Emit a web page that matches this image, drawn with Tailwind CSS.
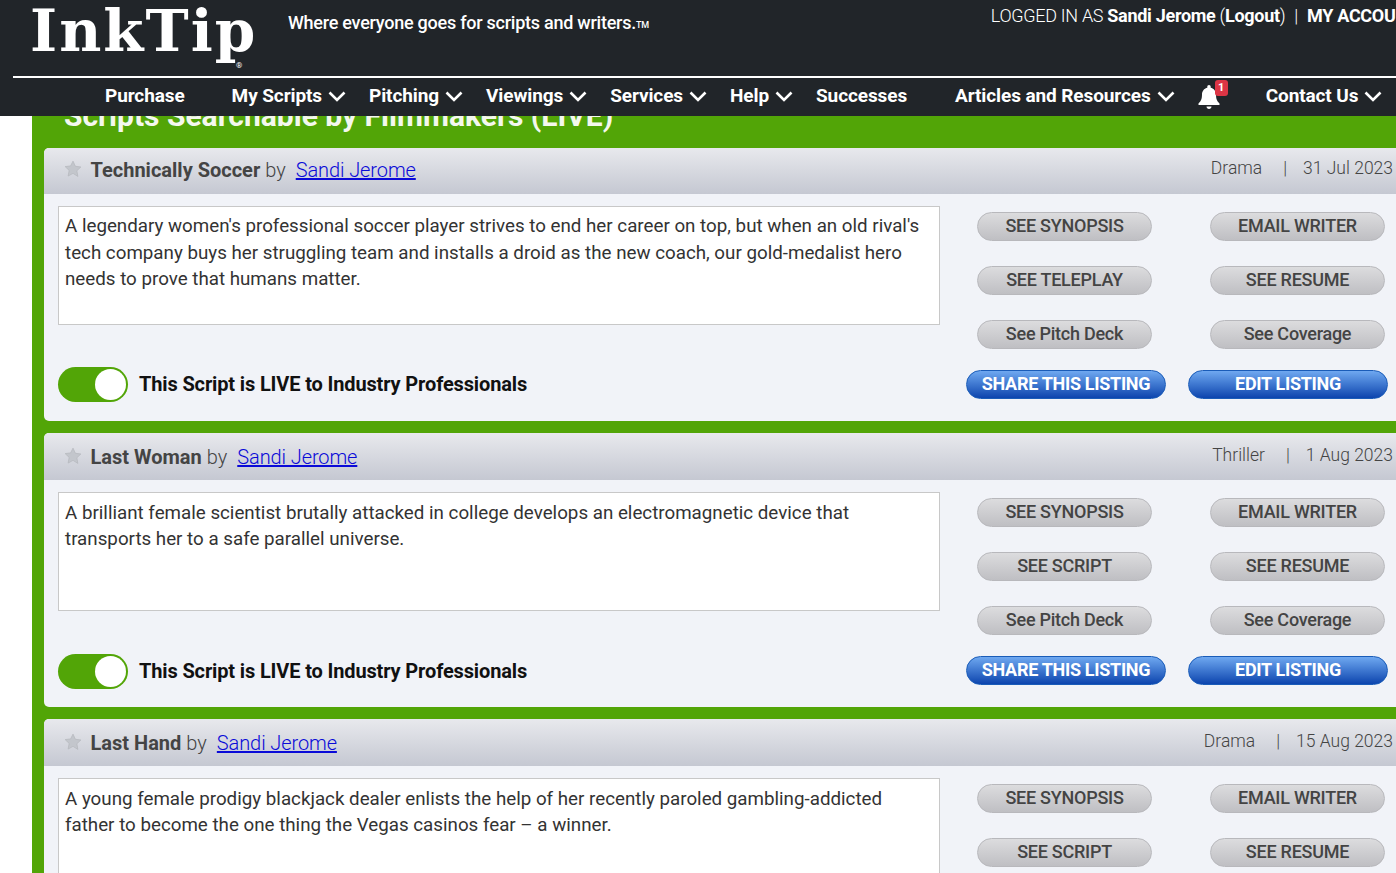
<!DOCTYPE html>
<html lang="en">
<head>
<meta charset="UTF-8">
<title>InkTip</title>
<script src="https://cdn.jsdelivr.net/npm/@tailwindcss/browser@4"></script>
</head>
<body class="bg-white font-['Roboto',sans-serif] w-[1396px] h-[873px] overflow-hidden">
<!-- header -->
<header class="relative z-10 h-[116px] bg-[#212529] text-white">
  <div class="h-[76px] flex items-start whitespace-nowrap overflow-hidden">
    <div class="relative ml-[30px] w-[226px] h-[76px] font-['DejaVu_Serif',serif] font-bold text-[58px] leading-[62px] tracking-[2px]">InkTip<span class="absolute left-[206px] top-[62px] text-[8px] leading-[8px] tracking-normal font-['Roboto'] font-normal">®</span></div>
    <div class="ml-[32px] mt-[12px] text-[18px] leading-[22px] font-medium tracking-[-0.25px]">Where everyone goes for scripts and writers.<span class="text-[9px] align-[1px]">TM</span></div>
    <div class="ml-[342px] mt-[5px] text-[18px] leading-[22px] font-light tracking-[-0.3px]">LOGGED IN AS <b class="font-bold">Sandi Jerome</b> (<b class="font-bold">Logout</b>)<span class="mx-[9px]">|</span><b class="font-bold">MY ACCOUNT</b></div>
  </div>
  <div class="ml-[13px] h-[2px] bg-white"></div>
  <nav class="h-[36px] flex items-center pl-[105px] text-[19px] font-bold tracking-[-0.1px] whitespace-nowrap">
    <a class="mr-[47px]">Purchase</a>
    <a class="flex items-center gap-[6px] mr-[23px]">My Scripts
      <svg class="w-[18px] h-[11px]" viewBox="0 0 18 11" fill="none" stroke="white" stroke-width="2.6"><path d="M1.5 1.5 9 9l7.5-7.5"/></svg></a>
    <a class="flex items-center gap-[6px] mr-[23px]">Pitching
      <svg class="w-[18px] h-[11px]" viewBox="0 0 18 11" fill="none" stroke="white" stroke-width="2.6"><path d="M1.5 1.5 9 9l7.5-7.5"/></svg></a>
    <a class="flex items-center gap-[6px] mr-[23px]">Viewings
      <svg class="w-[18px] h-[11px]" viewBox="0 0 18 11" fill="none" stroke="white" stroke-width="2.6"><path d="M1.5 1.5 9 9l7.5-7.5"/></svg></a>
    <a class="flex items-center gap-[6px] mr-[23px]">Services
      <svg class="w-[18px] h-[11px]" viewBox="0 0 18 11" fill="none" stroke="white" stroke-width="2.6"><path d="M1.5 1.5 9 9l7.5-7.5"/></svg></a>
    <a class="flex items-center gap-[6px] mr-[23px]">Help
      <svg class="w-[18px] h-[11px]" viewBox="0 0 18 11" fill="none" stroke="white" stroke-width="2.6"><path d="M1.5 1.5 9 9l7.5-7.5"/></svg></a>
    <a class="mr-[48px]">Successes</a>
    <a class="flex items-center gap-[6px] mr-[23px]">Articles and Resources
      <svg class="w-[18px] h-[11px]" viewBox="0 0 18 11" fill="none" stroke="white" stroke-width="2.6"><path d="M1.5 1.5 9 9l7.5-7.5"/></svg></a>
    <a class="relative w-[22px] h-[26px] mr-[46px]">
      <svg class="absolute left-0 top-[2px] w-[22px] h-[24px]" viewBox="0 0 22 24" fill="white"><path d="M11 0c1 0 1.7.8 1.700 1.800v.9C16 3.400 18 6.200 18 9.500c0 4.500 1 6.500 3.500 9v1.500H.5v-1.500C3 16 4 14 4 9.500c0-3.300 2-6.100 5.300-6.800v-.9C9.300.8 10 0 11 0z"/><path d="M8.500 21.500h5c0 1.400-1.100 2.500-2.500 2.500s-2.500-1.100-2.500-2.500z"/></svg>
      <span class="absolute left-[17px] top-[-3px] w-[13px] h-[16px] rounded-[3px] bg-[#dc3545] text-[11px] leading-[16px] text-center tracking-normal">1</span>
    </a>
    <a class="flex items-center gap-[6px]">Contact Us
      <svg class="w-[18px] h-[11px]" viewBox="0 0 18 11" fill="none" stroke="white" stroke-width="2.6"><path d="M1.5 1.5 9 9l7.5-7.5"/></svg></a>
  </nav>
</header>

<!-- green panel -->
<main class="ml-[32px] bg-[#52a507] pl-[12px] h-[757px] overflow-hidden">
  <h2 class="relative -top-[16px] h-[32px] pl-[20px] text-[30px] leading-[32px] font-bold text-[#f4f8ee] whitespace-nowrap">Scripts Searchable by Filmmakers (LIVE)</h2>

  <!-- card 1 -->
  <section class="rounded-l-[5px] bg-[#f1f3f8] h-[273px] mb-[12px]">
    <div class="h-[46px] pb-[2px] rounded-tl-[5px] bg-gradient-to-b from-[#e8e9ed] to-[#c5c8d2] flex items-center pl-[20px] pr-[3px] text-[20px] text-[#444]">
      <svg class="w-[18px] h-[18px] mr-[8.500px] -mt-[2px]" viewBox="0 0 24 24" fill="#c3c6cc" stroke="#b5b8be"><path d="M12 1.500l3.200 6.900 7.300.9-5.400 5.100 1.400 7.500L12 17.800l-6.500 3.600 1.400-7.500-5.400-5.100 7.300-.9z"/></svg>
      <b class="font-bold">Technically Soccer</b><span class="font-light ml-[5px]">by</span>
      <a class="ml-[10px] font-light text-[#0a0ad8] underline tracking-[-0.1px]">Sandi Jerome</a>
      <div class="ml-auto -mt-[4px] text-[17.5px] font-light whitespace-nowrap">Drama<span class="ml-[21px] mr-[16px]">|</span>31 Jul 2023</div>
    </div>
    <div class="flex pl-[14px]">
      <div class="w-[882px] shrink-0 pt-[12px]">
        <div class="h-[119px] bg-white border border-[#c8c8c8] pl-[6px] pr-[8px] pt-[6px] text-[18.75px] leading-[26.500px] text-[#333]">A legendary women's professional soccer player strives to end her career on top, but when an old rival's tech company buys her struggling team and installs a droid as the new coach, our gold-medalist hero needs to prove that humans matter.</div>
        <div class="flex items-center mt-[42px]">
          <div class="w-[70px] h-[35px] rounded-full bg-[#52a507] relative"><span class="absolute right-[2px] top-[2px] w-[31px] h-[31px] rounded-full bg-white"></span></div>
          <span class="ml-[11px] -mt-[1px] text-[20px] font-bold text-[#111] tracking-[-0.14px]">This Script is LIVE to Industry Professionals</span>
        </div>
      </div>
      <div class="ml-[37px] pt-[18px] shrink-0">
        <div class="grid grid-cols-[175px_175px] gap-x-[58px] gap-y-[25px] text-[18px] font-medium text-[#444] text-center leading-[25px] tracking-[-0.25px]">
          <a class="h-[29px] rounded-full border border-[#b8b8bc] bg-gradient-to-b from-[#dcdcde] to-[#bfbfc3]">SEE SYNOPSIS</a>
          <a class="h-[29px] rounded-full border border-[#b8b8bc] bg-gradient-to-b from-[#dcdcde] to-[#bfbfc3]">EMAIL WRITER</a>
          <a class="h-[29px] rounded-full border border-[#b8b8bc] bg-gradient-to-b from-[#dcdcde] to-[#bfbfc3]">SEE TELEPLAY</a>
          <a class="h-[29px] rounded-full border border-[#b8b8bc] bg-gradient-to-b from-[#dcdcde] to-[#bfbfc3]">SEE RESUME</a>
          <a class="h-[29px] rounded-full border border-[#b8b8bc] bg-gradient-to-b from-[#dcdcde] to-[#bfbfc3]">See Pitch Deck</a>
          <a class="h-[29px] rounded-full border border-[#b8b8bc] bg-gradient-to-b from-[#dcdcde] to-[#bfbfc3]">See Coverage</a>
        </div>
        <div class="flex gap-[22px] -ml-[11px] mt-[21px] text-[18px] font-bold text-white text-center leading-[25px] tracking-[-0.3px]">
          <a class="w-[200px] h-[29px] rounded-full border border-[#1a5cb8] bg-gradient-to-b from-[#6fa8f0] to-[#0c44ae]">SHARE THIS LISTING</a>
          <a class="w-[200px] h-[29px] rounded-full border border-[#1a5cb8] bg-gradient-to-b from-[#6fa8f0] to-[#0c44ae]">EDIT LISTING</a>
        </div>
      </div>
    </div>
  </section>

  <!-- card 2 -->
  <section class="rounded-l-[5px] bg-[#f1f3f8] h-[274px] mb-[12px]">
    <div class="h-[47px] rounded-tl-[5px] bg-gradient-to-b from-[#e8e9ed] to-[#c5c8d2] flex items-center pl-[20px] pr-[3px] text-[20px] text-[#444]">
      <svg class="w-[18px] h-[18px] mr-[8.500px] -mt-[2px]" viewBox="0 0 24 24" fill="#c3c6cc" stroke="#b5b8be"><path d="M12 1.500l3.200 6.900 7.300.9-5.400 5.100 1.400 7.500L12 17.800l-6.500 3.600 1.400-7.500-5.400-5.100 7.300-.9z"/></svg>
      <b class="font-bold">Last Woman</b><span class="font-light ml-[5px]">by</span>
      <a class="ml-[10px] font-light text-[#0a0ad8] underline tracking-[-0.1px]">Sandi Jerome</a>
      <div class="ml-auto -mt-[3px] text-[17.5px] font-light whitespace-nowrap">Thriller<span class="ml-[21px] mr-[16px]">|</span>1 Aug 2023</div>
    </div>
    <div class="flex pl-[14px]">
      <div class="w-[882px] shrink-0 pt-[12px]">
        <div class="h-[119px] bg-white border border-[#c8c8c8] pl-[6px] pr-[8px] pt-[7px] text-[18.75px] leading-[26px] text-[#333]">A brilliant female scientist brutally attacked in college develops an electromagnetic device that transports her to a safe parallel universe.</div>
        <div class="flex items-center mt-[43px]">
          <div class="w-[70px] h-[35px] rounded-full bg-[#52a507] relative"><span class="absolute right-[2px] top-[2px] w-[31px] h-[31px] rounded-full bg-white"></span></div>
          <span class="ml-[11px] -mt-[1px] text-[20px] font-bold text-[#111] tracking-[-0.14px]">This Script is LIVE to Industry Professionals</span>
        </div>
      </div>
      <div class="ml-[37px] pt-[18px] shrink-0">
        <div class="grid grid-cols-[175px_175px] gap-x-[58px] gap-y-[25px] text-[18px] font-medium text-[#444] text-center leading-[25px] tracking-[-0.25px]">
          <a class="h-[29px] rounded-full border border-[#b8b8bc] bg-gradient-to-b from-[#dcdcde] to-[#bfbfc3]">SEE SYNOPSIS</a>
          <a class="h-[29px] rounded-full border border-[#b8b8bc] bg-gradient-to-b from-[#dcdcde] to-[#bfbfc3]">EMAIL WRITER</a>
          <a class="h-[29px] rounded-full border border-[#b8b8bc] bg-gradient-to-b from-[#dcdcde] to-[#bfbfc3]">SEE SCRIPT</a>
          <a class="h-[29px] rounded-full border border-[#b8b8bc] bg-gradient-to-b from-[#dcdcde] to-[#bfbfc3]">SEE RESUME</a>
          <a class="h-[29px] rounded-full border border-[#b8b8bc] bg-gradient-to-b from-[#dcdcde] to-[#bfbfc3]">See Pitch Deck</a>
          <a class="h-[29px] rounded-full border border-[#b8b8bc] bg-gradient-to-b from-[#dcdcde] to-[#bfbfc3]">See Coverage</a>
        </div>
        <div class="flex gap-[22px] -ml-[11px] mt-[21px] text-[18px] font-bold text-white text-center leading-[25px] tracking-[-0.3px]">
          <a class="w-[200px] h-[29px] rounded-full border border-[#1a5cb8] bg-gradient-to-b from-[#6fa8f0] to-[#0c44ae]">SHARE THIS LISTING</a>
          <a class="w-[200px] h-[29px] rounded-full border border-[#1a5cb8] bg-gradient-to-b from-[#6fa8f0] to-[#0c44ae]">EDIT LISTING</a>
        </div>
      </div>
    </div>
  </section>

  <!-- card 3 -->
  <section class="rounded-l-[5px] bg-[#f1f3f8] h-[274px]">
    <div class="h-[47px] rounded-tl-[5px] bg-gradient-to-b from-[#e8e9ed] to-[#c5c8d2] flex items-center pl-[20px] pr-[3px] text-[20px] text-[#444]">
      <svg class="w-[18px] h-[18px] mr-[8.500px] -mt-[2px]" viewBox="0 0 24 24" fill="#c3c6cc" stroke="#b5b8be"><path d="M12 1.500l3.200 6.900 7.300.9-5.400 5.100 1.400 7.500L12 17.800l-6.500 3.600 1.400-7.500-5.400-5.100 7.300-.9z"/></svg>
      <b class="font-bold">Last Hand</b><span class="font-light ml-[5px]">by</span>
      <a class="ml-[10px] font-light text-[#0a0ad8] underline tracking-[-0.1px]">Sandi Jerome</a>
      <div class="ml-auto -mt-[3px] text-[17.5px] font-light whitespace-nowrap">Drama<span class="ml-[21px] mr-[16px]">|</span>15 Aug 2023</div>
    </div>
    <div class="flex pl-[14px]">
      <div class="w-[882px] shrink-0 pt-[12px]">
        <div class="h-[119px] bg-white border border-[#c8c8c8] pl-[6px] pr-[8px] pt-[7px] text-[18.75px] leading-[26px] text-[#333]">A young female prodigy blackjack dealer enlists the help of her recently paroled gambling-addicted father to become the one thing the Vegas casinos fear – a winner.</div>
      </div>
      <div class="ml-[37px] pt-[18px] shrink-0">
        <div class="grid grid-cols-[175px_175px] gap-x-[58px] gap-y-[25px] text-[18px] font-medium text-[#444] text-center leading-[25px] tracking-[-0.25px]">
          <a class="h-[29px] rounded-full border border-[#b8b8bc] bg-gradient-to-b from-[#dcdcde] to-[#bfbfc3]">SEE SYNOPSIS</a>
          <a class="h-[29px] rounded-full border border-[#b8b8bc] bg-gradient-to-b from-[#dcdcde] to-[#bfbfc3]">EMAIL WRITER</a>
          <a class="h-[29px] rounded-full border border-[#b8b8bc] bg-gradient-to-b from-[#dcdcde] to-[#bfbfc3]">SEE SCRIPT</a>
          <a class="h-[29px] rounded-full border border-[#b8b8bc] bg-gradient-to-b from-[#dcdcde] to-[#bfbfc3]">SEE RESUME</a>
        </div>
      </div>
    </div>
  </section>
</main>
</body>
</html>
